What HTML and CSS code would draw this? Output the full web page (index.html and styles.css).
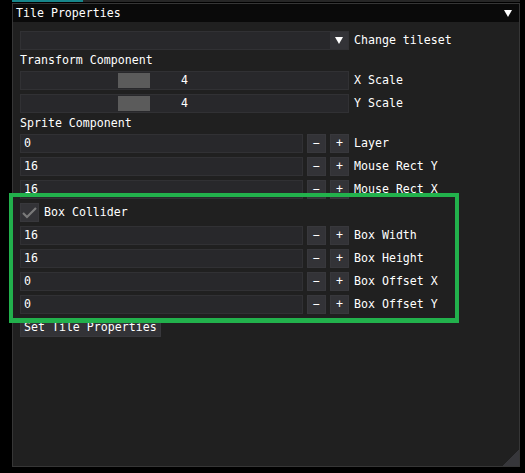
FILE: index.html
```html
<!DOCTYPE html>
<html>
<head>
<meta charset="utf-8">
<link rel="stylesheet" href="styles.css">
</head>
<body>
<div class="topstrip"><div class="tab"></div><div class="tabrest"></div></div>
<div class="window">
  <div class="titlebar">
    <span class="title">Tile Properties</span>
    <svg class="tri" width="8" height="7" viewBox="0 0 8 7"><polygon points="0,0 8,0 4,7" fill="#fff"/></svg>
  </div>
  <div class="content">
    <div class="row">
      <div class="combo"><div class="combo-val"></div><div class="combo-btn"><svg width="8" height="7" viewBox="0 0 8 7"><polygon points="0,0 8,0 4,7" fill="#fff"/></svg></div></div>
      <span class="label">Change tileset</span>
    </div>
    <div class="text">Transform Component</div>
    <div class="row">
      <div class="slider"><div class="grab" style="left:97px"></div><span class="sval">4</span></div>
      <span class="label">X Scale</span>
    </div>
    <div class="row">
      <div class="slider"><div class="grab" style="left:97px"></div><span class="sval">4</span></div>
      <span class="label">Y Scale</span>
    </div>
    <div class="text">Sprite Component</div>
    <div class="row">
      <div class="input">0</div><div class="btn">−</div><div class="btn">+</div><span class="label">Layer</span>
    </div>
    <div class="row">
      <div class="input">16</div><div class="btn">−</div><div class="btn">+</div><span class="label">Mouse Rect Y</span>
    </div>
    <div class="row">
      <div class="input">16</div><div class="btn">−</div><div class="btn">+</div><span class="label">Mouse Rect X</span>
    </div>
    <div class="row">
      <div class="check"><svg width="19" height="19" viewBox="0 0 19 19"><polyline points="3,10 7,14 16,5" fill="none" stroke="#7a7a7a" stroke-width="2.2"/></svg></div>
      <span class="label">Box Collider</span>
    </div>
    <div class="row">
      <div class="input">16</div><div class="btn">−</div><div class="btn">+</div><span class="label">Box Width</span>
    </div>
    <div class="row">
      <div class="input">16</div><div class="btn">−</div><div class="btn">+</div><span class="label">Box Height</span>
    </div>
    <div class="row">
      <div class="input">0</div><div class="btn">−</div><div class="btn">+</div><span class="label">Box Offset X</span>
    </div>
    <div class="row">
      <div class="input">0</div><div class="btn">−</div><div class="btn">+</div><span class="label">Box Offset Y</span>
    </div>
    <div class="row">
      <div class="button">Set Tile Properties</div>
    </div>
  </div>
  <div class="grip"></div>
</div>
<div class="highlight"></div>
</body>
</html>
```

FILE: styles.css
```css
html, body {
  margin: 0;
  padding: 0;
  background: #000;
  width: 525px;
  height: 473px;
  overflow: hidden;
  font-family: "DejaVu Sans Mono", "Liberation Mono", monospace;
  font-size: 11.6px;
  line-height: 13px;
  color: #fff;
}

.topstrip {
  display: flex;
  height: 3px;
  margin-left: 12px;
  width: 508px;
}
.tab {
  width: 71px;
  height: 2px;
  background: #17868b;
}
.tabrest {
  flex: 1;
  height: 2px;
  background: #262626;
}

.window {
  position: relative;
  margin-left: 12px;
  width: 508px;
  height: 464px;
  box-sizing: border-box;
  border: 1px solid #363636;
  background: #202020;
}

.titlebar {
  height: 18px;
  background: #0a0a0a;
  display: flex;
  align-items: center;
  justify-content: space-between;
  padding: 0 7px 0 3px;
}
.titlebar .tri {
  display: block;
  margin-top: 1px;
}

.content {
  display: flex;
  flex-direction: column;
  gap: 4px;
  padding: 9px 7px 0 7px;
}

.row {
  display: flex;
  align-items: center;
  gap: 4px;
  height: 19px;
}

.text {
  height: 13px;
  white-space: pre;
}

.label {
  white-space: pre;
  margin-left: 1px;
}

.combo {
  width: 329px;
  height: 19px;
  display: flex;
  box-sizing: border-box;
  border: 1px solid #313134;
  background: #28282b;
}
.combo-val {
  flex: 1;
}
.combo-btn {
  width: 18px;
  background: #333337;
  display: flex;
  align-items: center;
  justify-content: center;
}

.slider {
  position: relative;
  width: 329px;
  height: 19px;
  box-sizing: border-box;
  border: 1px solid #313134;
  background: #28282b;
  display: flex;
  align-items: center;
  justify-content: center;
}
.grab {
  position: absolute;
  top: 1px;
  width: 32px;
  height: 15px;
  background: #5b5b5b;
}
.sval {
  position: relative;
}

.input {
  width: 283px;
  height: 19px;
  box-sizing: border-box;
  border: 1px solid #313134;
  background: #28282b;
  padding: 2px 3px;
  white-space: pre;
}

.btn {
  width: 19px;
  height: 19px;
  box-sizing: border-box;
  background: #333337;
  border: 1px solid #38383c;
  display: flex;
  align-items: center;
  justify-content: center;
}

.check {
  width: 19px;
  height: 19px;
  box-sizing: border-box;
  background: #333337;
  border: 1px solid #38383c;
  display: flex;
  align-items: center;
  justify-content: center;
}
.check svg {
  display: block;
  margin: -1px;
}

.button {
  height: 19px;
  box-sizing: border-box;
  background: #333337;
  border: 1px solid #38383c;
  padding: 2px 3px;
  white-space: pre;
}

.grip {
  position: absolute;
  right: 0;
  bottom: 0;
  width: 16px;
  height: 16px;
  background: linear-gradient(135deg, transparent 50%, #37373b 50%);
}

.highlight {
  position: absolute;
  left: 9px;
  top: 193px;
  width: 450px;
  height: 130px;
  box-sizing: border-box;
  border: 4px solid #22b14c;
  border-bottom-width: 5px;
}
```
